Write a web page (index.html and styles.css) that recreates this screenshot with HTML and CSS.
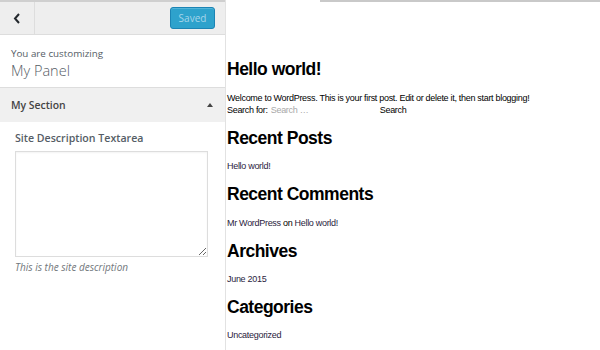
FILE: index.html
```html
<!DOCTYPE html>
<html lang="en">
<head>
<meta charset="utf-8">
<title>Customizer</title>
<link rel="stylesheet" href="styles.css">
</head>
<body>
<div class="app">
  <aside class="sidebar">
    <div class="header">
      <button class="back" aria-label="Back">
        <svg width="8" height="11" viewBox="0 0 8 11"><path d="M6 1 L2 5.5 L6 10" fill="none" stroke="#23282d" stroke-width="2"/></svg>
      </button>
      <div class="header-actions">
        <button class="saved">Saved</button>
      </div>
    </div>
    <div class="panel-info">
      <span class="customizing">You are customizing</span>
      <h3 class="panel-title">My Panel</h3>
    </div>
    <div class="section-title">
      <span class="section-name">My Section</span>
      <span class="arrow"></span>
    </div>
    <div class="section-body">
      <label class="control-label" for="desc">Site Description Textarea</label>
      <textarea id="desc" class="control-textarea"></textarea>
      <span class="control-desc">This is the site description</span>
    </div>
  </aside>
  <main class="preview">
    <div class="topline"></div>
    <div class="content">
      <h2 class="post-title">Hello world!</h2>
      <p class="text">Welcome to WordPress. This is your first post. Edit or delete it, then start blogging!</p>
      <form class="search">
        <label class="search-label">Search for:</label>
        <input class="search-input" type="text" placeholder="Search …">
        <button class="search-btn" type="button">Search</button>
      </form>
      <h2 class="widget-title">Recent Posts</h2>
      <p class="text"><a class="link">Hello world!</a></p>
      <h2 class="widget-title">Recent Comments</h2>
      <p class="text"><a class="link">Mr WordPress</a> on <a class="link">Hello world!</a></p>
      <h2 class="widget-title">Archives</h2>
      <p class="text"><a class="link">June 2015</a></p>
      <h2 class="widget-title">Categories</h2>
      <p class="text"><a class="link">Uncategorized</a></p>
    </div>
  </main>
</div>
</body>
</html>
```

FILE: styles.css
```css
* { box-sizing: border-box; }
html, body { margin: 0; padding: 0; background: #fff; }
body { width: 600px; height: 350px; overflow: hidden; }

.app {
  display: flex;
  height: 350px;
}

.sidebar {
  width: 226px;
  flex: none;
  border-right: 1px solid #e2e2e2;
  background: #fff;
  font-family: "Open Sans", "Liberation Sans", sans-serif;
  color: #555d66;
  display: flex;
  flex-direction: column;
}

.header {
  height: 35px;
  background: #eeeeee;
  border-top: 2px solid #cfcfcf;
  border-bottom: 1px solid #dddddd;
  display: flex;
  align-items: stretch;
}

.back {
  width: 35px;
  border: 0;
  border-right: 1px solid #dddddd;
  background: transparent;
  padding: 0;
  display: flex;
  align-items: center;
  justify-content: center;
}

.header-actions {
  flex: 1;
  display: flex;
  align-items: center;
  justify-content: flex-end;
  padding-right: 10px;
}

.saved {
  height: 22px;
  width: 45px;
  padding: 0;
  border: 1px solid #1c84b4;
  border-radius: 3px;
  background: #2ea2cc;
  color: #a5d5ea;
  font-family: "Open Sans", sans-serif;
  font-size: 10px;
  line-height: 20px;
  box-shadow: inset 0 1px 0 rgba(120, 200, 230, 0.5);
}

.panel-info {
  padding: 12px 11px 7px;
  border-bottom: 1px solid #dddddd;
}

.customizing {
  display: block;
  font-size: 9.8px;
  line-height: 13px;
  color: #555d66;
}

.panel-title {
  margin: 2px 0 0;
  font-size: 14.5px;
  line-height: 18px;
  font-weight: 300;
  color: #555d66;
}

.section-title {
  height: 34px;
  background: #f0f0f0;
  display: flex;
  align-items: center;
  justify-content: space-between;
  padding: 0 12px 0 11px;
}

.section-name {
  font-size: 10.4px;
  font-weight: 600;
  color: #444;
  line-height: 14px;
}

.arrow {
  width: 0;
  height: 0;
  border-left: 3px solid transparent;
  border-right: 3px solid transparent;
  border-bottom: 4px solid #444;
}

.section-body {
  padding: 9px 15px 0;
  display: flex;
  flex-direction: column;
  align-items: flex-start;
}

.control-label {
  font-size: 10.6px;
  font-weight: 600;
  line-height: 14px;
  color: #555d66;
}

.control-textarea {
  margin: 6px 0 0;
  width: 193px;
  height: 106px;
  border: 1px solid #dddddd;
  box-shadow: inset 0 1px 2px rgba(0, 0, 0, 0.05);
  border-radius: 0;
  background: #fff;
  font-family: "Open Sans", sans-serif;
  font-size: 10px;
}

.control-desc {
  margin-top: 4px;
  font-size: 10px;
  line-height: 13px;
  font-style: italic;
  color: #72777c;
}

.preview {
  flex: 1;
  background: #fff;
  font-family: "Liberation Sans", Arial, sans-serif;
  color: #000;
}

.topline {
  height: 2px;
  margin-left: 94px;
  background: #c9c9c9;
}

.content {
  padding: 57px 0 0 1px;
}

.post-title,
.widget-title {
  margin: 0 0 12.2px;
  font-size: 17.5px;
  line-height: 20px;
  font-weight: 700;
  letter-spacing: -0.5px;
}

.post-title { margin-bottom: 13px; }

.text {
  margin: 0 0 12.2px;
  font-size: 9px;
  line-height: 12px;
  letter-spacing: -0.3px;
}

.post-title + .text { margin-bottom: 0; }

.link { color: #2a2340; text-decoration: none; }

.search {
  display: flex;
  align-items: center;
  height: 12px;
  margin: 0 0 12px;
  font-size: 9px;
  letter-spacing: -0.3px;
}

.search-label { line-height: 12px; }

.search-input {
  width: 110px;
  height: 12px;
  margin: 0 0 0 2px;
  padding: 0 1px;
  border: 0;
  outline: 0;
  background: transparent;
  font-family: "Liberation Sans", Arial, sans-serif;
  font-size: 9px;
  letter-spacing: -0.3px;
}

.search-input::placeholder { color: #a8a8a8; }

.search-btn {
  margin: 0;
  padding: 0;
  border: 0;
  background: transparent;
  font-family: "Liberation Sans", Arial, sans-serif;
  font-size: 9px;
  letter-spacing: -0.3px;
  color: #000;
  line-height: 12px;
}
```
